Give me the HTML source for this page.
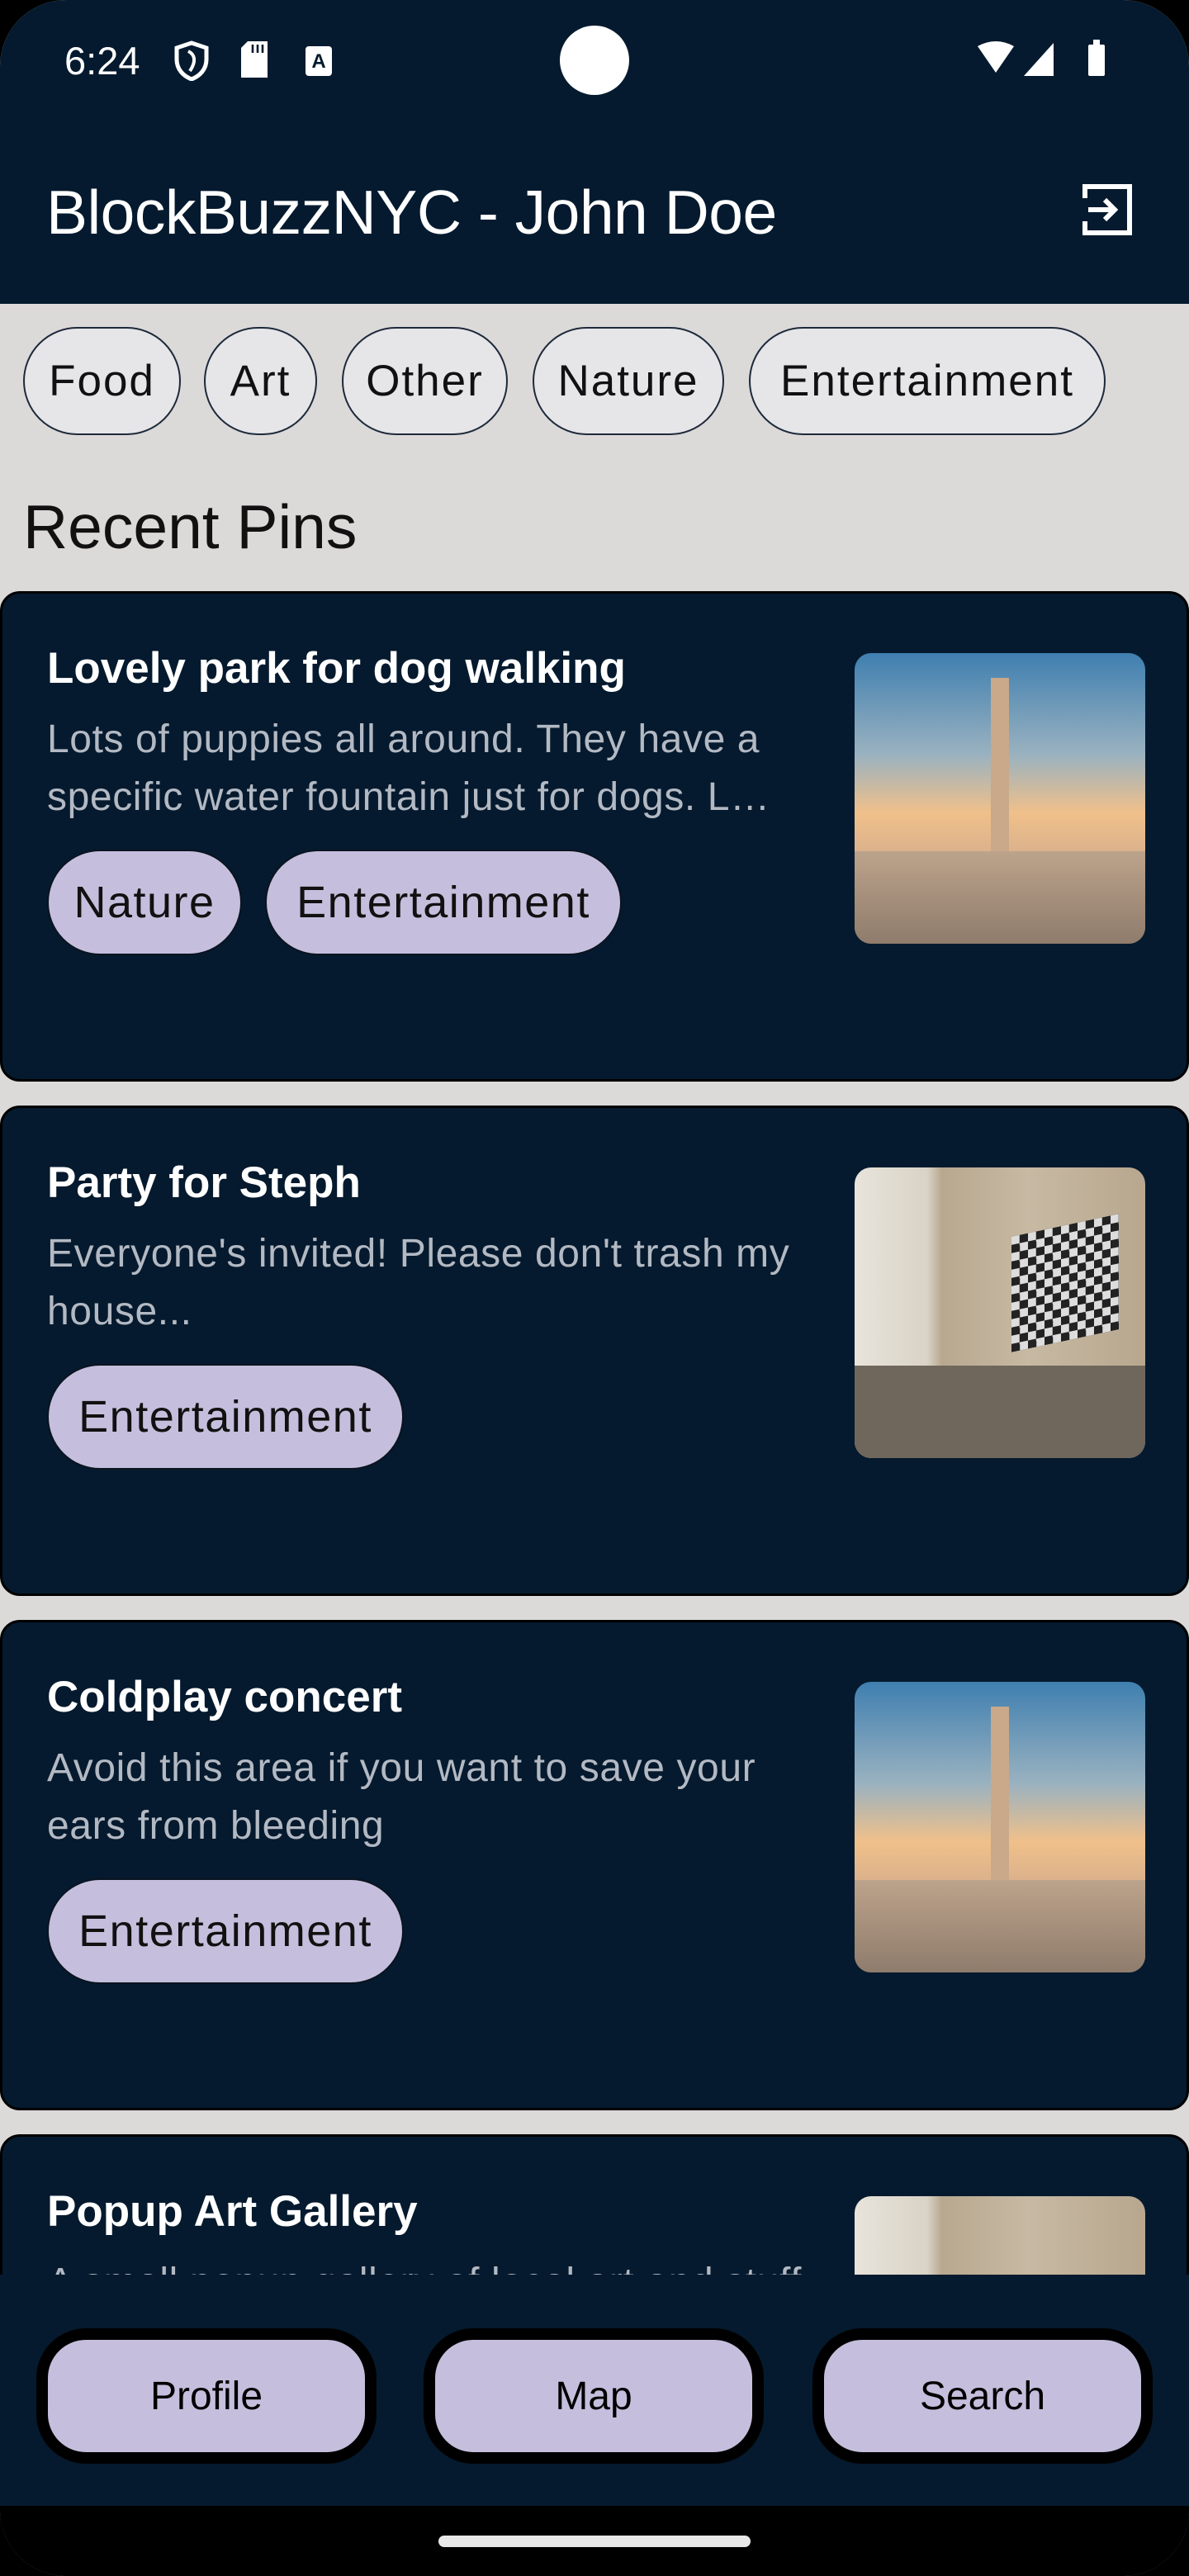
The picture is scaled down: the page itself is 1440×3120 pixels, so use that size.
<!DOCTYPE html>
<html><head><meta charset="utf-8"><style>
*{margin:0;padding:0;box-sizing:border-box}
body{width:1440px;height:3120px;background:#000;font-family:"Liberation Sans",Roboto,sans-serif;position:relative;overflow:hidden}
.screen{position:absolute;left:0;top:0;width:1440px;height:3120px;background:#dcd9d9;border-radius:80px;overflow:hidden}
.top{position:absolute;left:0;top:0;width:1440px;height:368px;background:#051a2e}
.abs{position:absolute}
.chip{position:absolute;top:396px;height:131px;border:2px solid #1d2a3a;border-radius:66px;background:#e6e5e8;font-size:53px;color:#111;display:flex;align-items:center;justify-content:center;letter-spacing:2px}
.card{position:absolute;left:0;width:1440px;height:594px;background:#051a2e;border:3px solid #000;border-radius:24px;overflow:hidden}
.card h2{position:absolute;left:54px;top:60px;font-size:53px;color:#fff;font-weight:bold}
.card p{position:absolute;left:54px;top:142px;width:950px;font-size:48px;line-height:70px;color:#b3b9c3;letter-spacing:.6px}
.tag{position:absolute;top:310px;height:128px;border-radius:64px;background:#c5bfdd;border:2px solid #0a1420;font-size:54px;color:#111;display:flex;align-items:center;justify-content:center;letter-spacing:1.5px}
.img{position:absolute;left:1032px;top:72px;width:352px;height:352px;border-radius:20px;overflow:hidden}
.city{background:linear-gradient(#3f7fb0 0%,#9ab2c0 35%,#f0c08a 55%,#d9b08c 70%,#b59a82 100%)}
.room{background:linear-gradient(90deg,#e8e4dc 0%,#d9d3c6 25%,#b8a890 30%,#c7b9a2 60%,#b8a78f 100%)}
.nav{position:absolute;left:0;top:2755px;width:1440px;height:280px;background:#051a2e}
.btn{position:absolute;top:2820px;height:164px;width:412px;border:14px solid #000;border-radius:60px;background:#c5bfdd;font-size:48px;color:#000;display:flex;align-items:center;justify-content:center;font-weight:500}
</style></head><body>
<div class="screen">
<div class="top"></div>
<div class="abs" style="left:78px;top:46px;font-size:47px;color:#fff">6:24</div>
<svg class="abs" style="left:210px;top:48px" width="44" height="50" viewBox="0 0 22 25"><path d="M11 2 L20 5 V12 C20 18 16 22 11 24 C6 22 2 18 2 12 V5 Z" fill="none" stroke="#fff" stroke-width="2.5"/><path d="M9 7 C13 9 14 13 10 19" fill="none" stroke="#fff" stroke-width="2"/></svg>
<svg class="abs" style="left:290px;top:50px" width="36" height="44" viewBox="0 0 18 22"><path d="M5 0 H17 V22 H1 V4 Z" fill="#fff"/><path d="M8 2v5M11 2v5M14 2v5" stroke="#051a2e" stroke-width="1.3"/></svg>
<svg class="abs" style="left:368px;top:54px" width="36" height="40" viewBox="0 0 18 20"><rect x="1" y="1" width="16" height="18" rx="2" fill="#fff"/><text x="9" y="14" font-size="12" font-weight="bold" text-anchor="middle" fill="#051a2e" font-family="Liberation Sans">A</text></svg>
<div class="abs" style="left:678px;top:31px;width:84px;height:84px;border-radius:50%;background:#fff"></div>
<svg class="abs" style="left:1180px;top:48px" width="176" height="48" viewBox="0 0 88 24"><path d="M2 4 Q13 -2 24 4 L13 20 Z" fill="#fff"/><path d="M48 2 V22 H30 Z" fill="#fff"/><rect x="69" y="3" width="10" height="19" rx="1" fill="#fff"/><rect x="72" y="0" width="4" height="4" fill="#fff"/></svg>
<div class="abs" style="left:56px;top:214px;font-size:75px;color:#fff;letter-spacing:-0.5px">BlockBuzzNYC - John Doe</div>
<svg class="abs" style="left:1306px;top:220px" width="68" height="68" viewBox="0 0 34 34"><path d="M4 10 V3 H31 V31 H4 V24" fill="none" stroke="#fff" stroke-width="3"/><path d="M6 17 H22 M16 11 L22 17 L16 23" fill="none" stroke="#fff" stroke-width="3"/></svg>

<div class="chip" style="left:28px;width:191px">Food</div>
<div class="chip" style="left:247px;width:137px">Art</div>
<div class="chip" style="left:414px;width:201px">Other</div>
<div class="chip" style="left:645px;width:232px">Nature</div>
<div class="chip" style="left:907px;width:432px">Entertainment</div>
<div class="abs" style="left:28px;top:595px;font-size:75px;color:#111">Recent Pins</div>

<div class="card" style="top:716px">
<h2>Lovely park for dog walking</h2>
<p>Lots of puppies all around. They have a specific water fountain just for dogs. L…</p>
<div class="tag" style="left:54px;width:236px">Nature</div>
<div class="tag" style="left:318px;width:432px">Entertainment</div>
<div class="img city"><div class="abs" style="left:165px;top:30px;width:22px;height:322px;background:#c9a98a"></div><div class="abs" style="left:0;top:240px;width:352px;height:112px;background:linear-gradient(#bca38b,#8f7c6c)"></div></div>
</div>
<div class="card" style="top:1339px">
<h2>Party for Steph</h2>
<p>Everyone's invited! Please don't trash my house...</p>
<div class="tag" style="left:54px;width:432px">Entertainment</div>
<div class="img room"><div class="abs" style="left:190px;top:70px;width:130px;height:140px;background:repeating-conic-gradient(#222 0 25%,#ddd 0 50%) 0 0/20px 20px;transform:skewY(-12deg)"></div><div class="abs" style="left:0;top:240px;width:352px;height:112px;background:#6f675c"></div></div>
</div>
<div class="card" style="top:1962px">
<h2>Coldplay concert</h2>
<p>Avoid this area if you want to save your ears from bleeding</p>
<div class="tag" style="left:54px;width:432px">Entertainment</div>
<div class="img city"><div class="abs" style="left:165px;top:30px;width:22px;height:322px;background:#c9a98a"></div><div class="abs" style="left:0;top:240px;width:352px;height:112px;background:linear-gradient(#bca38b,#8f7c6c)"></div></div>
</div>
<div class="card" style="top:2585px">
<h2>Popup Art Gallery</h2>
<p>A small popup gallery of local art and stuff</p>
<div class="img room"></div>
</div>

<div class="nav"></div>
<div class="btn" style="left:44px">Profile</div>
<div class="btn" style="left:513px">Map</div>
<div class="btn" style="left:984px">Search</div>
<div class="abs" style="left:0;top:3035px;width:1440px;height:85px;background:#000"></div>
<div class="abs" style="left:531px;top:3071px;width:378px;height:14px;border-radius:7px;background:#e8e8e8"></div>
</div>
</body></html>
